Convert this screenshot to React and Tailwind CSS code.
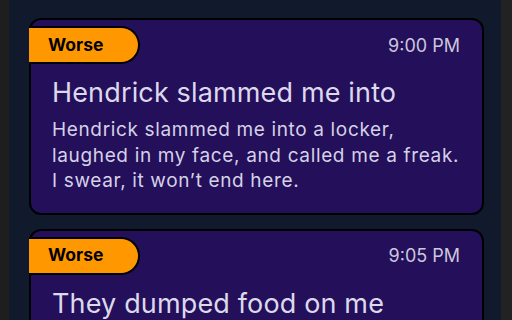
import React from 'react';

const entries = [
  {
    id: 1,
    tag: 'Worse',
    time: '9:00 PM',
    title: 'Hendrick slammed me into',
    body: 'Hendrick slammed me into a locker, laughed in my face, and called me a freak. I swear, it won’t end here.',
  },
  {
    id: 2,
    tag: 'Worse',
    time: '9:05 PM',
    title: 'They dumped food on me',
    body: 'They dumped food on me in the cafeteria while everyone watched and nobody said a word.',
  },
];

function EntryCard({ entry }) {
  return (
    <div className="flex flex-col rounded-[12px] border-2 border-black bg-[#240f5a] pt-[6px] pb-[19px]">
      <div className="flex items-center justify-between">
        <div className="-ml-[2px] flex h-[38px] w-[111px] items-center rounded-r-full border-y-2 border-r-2 border-black bg-[#ff9800] pl-[19px] text-[17.5px] font-bold text-black">
          {entry.tag}
        </div>
        <span className="pr-[22px] text-[18px] text-[#cbc7dd]">{entry.time}</span>
      </div>
      <h3 className="mt-[13px] pl-[21px] pr-[16px] text-[27px] leading-[32px] tracking-[0.15px] text-[#dcd9ec]">{entry.title}</h3>
      <p className="mt-[8px] pl-[21px] pr-[19px] text-[19px] leading-[25.5px] tracking-[0.65px] text-[#d5d1e7]">{entry.body}</p>
    </div>
  );
}

export default function App() {
  return (
    <div
      className="flex h-[320px] w-[512px] overflow-hidden bg-[#1e1e1e]"
      style={{ fontFamily: 'Inter, "Noto Sans", sans-serif' }}
    >
      <div className="w-[9px] shrink-0 bg-[#1e1e1e]" />
      <div className="flex flex-1 flex-col gap-[14px] bg-[#111a2c] pt-[18px] pl-[20px] pr-[17px]">
        {entries.map(entry => (
          <EntryCard key={entry.id} entry={entry} />
        ))}
      </div>
      <div className="w-[11px] shrink-0 bg-[#222222]" />
    </div>
  );
}
